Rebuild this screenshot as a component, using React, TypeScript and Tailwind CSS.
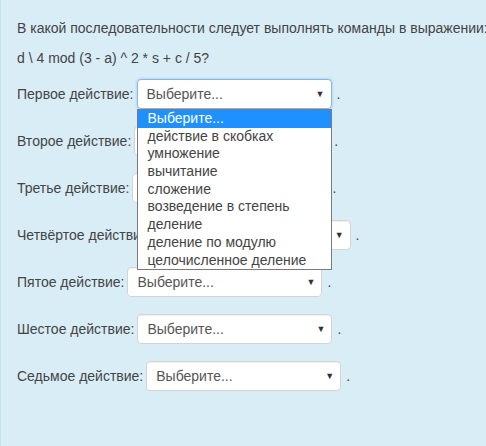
import React from 'react';

const OPTIONS = [
  'Выберите...',
  'действие в скобках',
  'умножение',
  'вычитание',
  'сложение',
  'возведение в степень',
  'деление',
  'деление по модулю',
  'целочисленное деление',
];

const STEPS = [
  'Первое действие:',
  'Второе действие:',
  'Третье действие:',
  'Четвёртое действие:',
  'Пятое действие:',
  'Шестое действие:',
  'Седьмое действие:',
];

function FakeSelect({ open, focused }: { open?: boolean; focused?: boolean }) {
  return (
    <div className="relative">
      <div
        className={
          'flex h-[30px] w-[195px] items-center justify-between rounded-[4px] border bg-white pl-[9px] pr-[6px] ' +
          (focused
            ? 'border-[#8cb6de] shadow-[0_0_3px_rgba(102,175,233,0.6)]'
            : 'border-[#d4d4d4] shadow-[inset_0_1px_1px_rgba(0,0,0,0.06)]')
        }
      >
        <span className="text-[#555]">Выберите...</span>
        <span className="text-[9px] text-[#333]">▼</span>
      </div>
      {open && (
        <ul className="absolute left-0 top-[30px] z-10 w-[195px] border border-[#7a7a7a] bg-white">
          {OPTIONS.map((o, i) => (
            <li
              key={o}
              className={
                'h-[17.7px] pl-[10px] text-[14px] leading-[17.7px] ' +
                (i === 0 ? 'bg-[#1e90ff] text-white' : 'text-[#444]')
              }
            >
              {o}
            </li>
          ))}
        </ul>
      )}
    </div>
  );
}

export default function App() {
  return (
    <div
      className="h-[446px] w-[486px] overflow-hidden border-l border-[#c4e3ef] bg-[#d9edf7] pl-[16px] pt-[18px] text-[14px] leading-[20px] text-[#444]"
      style={{ fontFamily: '"Liberation Sans", Arial, sans-serif' }}
    >
      <p className="whitespace-nowrap">В какой последовательности следует выполнять команды в выражении:</p>
      <p className="mt-[10px]">d \ 4 mod (3 - a) ^ 2 * s + c / 5?</p>
      <div className="mt-[11px] flex flex-col gap-[17px]">
        {STEPS.map((s, i) => (
          <div key={s} className="flex items-center">
            <span className="mr-[3px]">{s}</span>
            <FakeSelect open={i === 0} focused={i === 0} />
            <span className="ml-[5px]">.</span>
          </div>
        ))}
      </div>
    </div>
  );
}
